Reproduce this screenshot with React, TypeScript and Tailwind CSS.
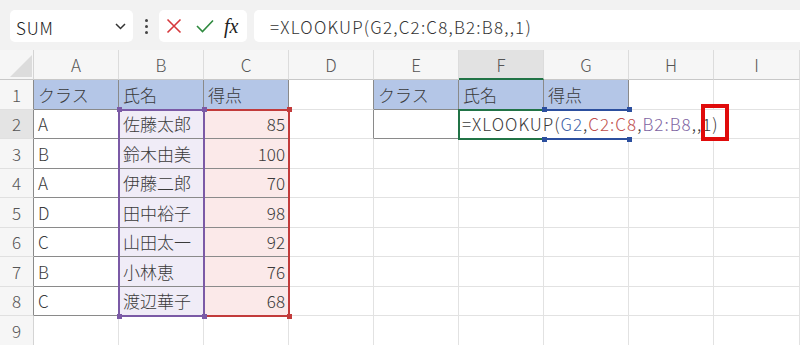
import React from "react";

const COLS = ["A", "B", "C", "D", "E", "F", "G", "H", "I"];

const cellText: Record<string, string> = {
  "1-0": "クラス",
  "1-1": "氏名",
  "1-2": "得点",
  "1-4": "クラス",
  "1-5": "氏名",
  "1-6": "得点",
};
const rows = [
  ["A", "佐藤太郎", "85"],
  ["B", "鈴木由美", "100"],
  ["A", "伊藤二郎", "70"],
  ["D", "田中裕子", "98"],
  ["C", "山田太一", "92"],
  ["B", "小林恵", "76"],
  ["C", "渡辺華子", "68"],
];
rows.forEach((r, i) => {
  cellText[`${i + 2}-0`] = r[0];
  cellText[`${i + 2}-1`] = r[1];
  cellText[`${i + 2}-2`] = r[2];
});

const inA = (r: number, c: number) => r >= 1 && r <= 8 && c >= 0 && c <= 2;
const inE = (r: number, c: number) => r >= 1 && r <= 2 && c >= 4 && c <= 6;
const inT = (r: number, c: number) => inA(r, c) || inE(r, c);

const FONT = "font-['Noto_Sans_CJK_JP',sans-serif]";

function Cell({ r, c }: { r: number; c: number }) {
  const key = `${r}-${c}`;
  const text = cellText[key];
  const rd = inT(r, c) || inT(r, c + 1);
  const bd = inT(r, c) || inT(r + 1, c);
  let bg = "";
  if (r === 1 && inT(r, c)) bg = "bg-[#b4c6e7]";
  else if (r >= 2 && r <= 8 && c === 1) bg = "bg-[#f0ecf7]";
  else if (r >= 2 && r <= 8 && c === 2) bg = "bg-[#fbe9e9]";
  const isNum = r >= 2 && c === 2;
  if (r === 2 && c === 5) {
    return (
      <div className="relative z-10 border-r border-b border-r-[#e2e2e2] border-b-[#8a8a8a] flex items-center overflow-visible">
        <span className="h-full inline-flex items-center whitespace-nowrap bg-white pl-[3px] pr-[2px] text-[17px] leading-none tracking-[1px] text-[#3a3a3a] font-light">
          <span>=XLOOKUP(</span>
          <span className="text-[#3f62a8]">G2</span>
          <span>,</span>
          <span className="text-[#c0504d]">C2:C8</span>
          <span>,</span>
          <span className="text-[#8064a2]">B2:B8</span>
          <span>,,1)</span>
        </span>
      </div>
    );
  }
  return (
    <div
      className={`border-r border-b ${rd ? "border-r-[#8a8a8a]" : "border-r-[#e2e2e2]"} ${
        bd ? "border-b-[#8a8a8a]" : "border-b-[#e2e2e2]"
      } ${bg} flex items-center ${isNum ? "justify-end pr-[3px]" : "pl-[4px]"} text-[17px] leading-none text-[#3a3a3a] font-light whitespace-nowrap overflow-hidden`}
    >
      {text ?? ""}
    </div>
  );
}

function RowHeader({ r }: { r: number }) {
  const dark = inT(r, 0);
  return (
    <div
      className={`border-r border-b border-b-[#e0e0e0] ${dark ? "border-r-[#8a8a8a]" : "border-r-[#d4d4d4]"} ${
        r === 2 ? "bg-[#e4e4e4]" : "bg-[#f6f6f6]"
      } flex items-center justify-center text-[17px] leading-none text-[#555] font-light`}
    >
      {r}
    </div>
  );
}

function ColHeader({ c }: { c: number }) {
  const sel = c === 5;
  return (
    <div
      className={`flex items-center justify-center text-[17px] leading-none text-[#555] font-light border-r border-r-[#dcdcdc] ${
        sel ? "bg-[#e2e2e2] border-b-2 border-b-[#217346]" : "bg-[#f6f6f6] border-b border-b-[#c8c8c8]"
      }`}
    >
      {COLS[c]}
    </div>
  );
}

function Handle({ cls }: { cls: string }) {
  return <div className={`absolute w-[5px] h-[5px] z-30 ${cls}`} />;
}

export default function App() {
  const grid: React.ReactNode[] = [];
  grid.push(
    <div key="corner" className="relative bg-[#f6f6f6] border-r border-b border-r-[#d4d4d4] border-b-[#c8c8c8]">
      <svg className="absolute left-[10px] top-[5px]" width="22" height="22" viewBox="0 0 22 22">
        <polygon points="0,22 22,22 22,0" fill="#dcdcdc" />
      </svg>
    </div>
  );
  for (let c = 0; c < 9; c++) grid.push(<ColHeader key={`h${c}`} c={c} />);
  for (let r = 1; r <= 9; r++) {
    grid.push(<RowHeader key={`r${r}`} r={r} />);
    for (let c = 0; c < 9; c++) grid.push(<Cell key={`${r}-${c}`} r={r} c={c} />);
  }

  return (
    <div className={`w-[800px] h-[345px] overflow-hidden bg-white ${FONT}`}>
      {/* formula bar */}
      <div className="h-[50px] bg-[#f2f2f2] flex items-start pt-[10px] pl-[10px]">
        <div className="w-[123px] h-[32px] bg-white rounded-[5px] flex items-center justify-between pl-[6px] pr-[7px]">
          <span className="text-[17px] leading-none tracking-[0.8px] text-[#222] font-light pt-[2px]">SUM</span>
          <svg width="11" height="7" viewBox="0 0 11 7">
            <path d="M1 1 L5.5 5.5 L10 1" stroke="#333" strokeWidth="1.5" fill="none" />
          </svg>
        </div>
        <div className="w-[26px] h-[32px] flex flex-col items-center justify-center gap-[3px]">
          <div className="w-[3px] h-[3px] rounded-full bg-[#444]" />
          <div className="w-[3px] h-[3px] rounded-full bg-[#444]" />
          <div className="w-[3px] h-[3px] rounded-full bg-[#444]" />
        </div>
        <div className="w-[88px] h-[32px] bg-white rounded-[5px] flex items-center pl-[7px] gap-[14px]">
          <svg width="16" height="16" viewBox="0 0 16 16">
            <path d="M1.5 1.5 L14.5 14.5 M14.5 1.5 L1.5 14.5" stroke="#d6383c" strokeWidth="1.6" fill="none" />
          </svg>
          <svg width="18" height="14" viewBox="0 0 18 14">
            <path d="M1 7 L6.5 12.5 L17 1.5" stroke="#2f8a3f" strokeWidth="1.6" fill="none" />
          </svg>
          <span className="font-['Liberation_Serif',serif] italic text-[20px] leading-none text-[#222] -ml-[4px]">fx</span>
        </div>
        <div className="ml-[7px] flex-1 h-[32px] bg-white rounded-l-[5px] pl-[16px] flex items-center text-[17px] leading-none tracking-[1.2px] text-[#333] font-light">
          =XLOOKUP(G2,C2:C8,B2:B8,,1)
        </div>
      </div>

      {/* sheet grid */}
      <div className="relative grid grid-cols-[34px_repeat(8,85px)_86px] grid-rows-[30px_repeat(9,29.5px)]">
        {grid}

        {/* red range C2:C8 */}
        <div className="absolute left-[203px] top-[58.5px] w-[87px] h-[208.5px] border-2 border-[#c23b3b] z-20 pointer-events-none" />
        {/* purple range B2:B8 */}
        <div className="absolute left-[118px] top-[58.5px] w-[87px] h-[208.5px] border-2 border-[#7b5aa6] z-20 pointer-events-none" />
        <Handle cls="left-[287px] top-[57px] bg-[#c23b3b]" />
        <Handle cls="left-[287px] top-[264px] bg-[#c23b3b]" />
        <Handle cls="left-[117px] top-[57px] bg-[#7b5aa6]" />
        <Handle cls="left-[202px] top-[57px] bg-[#7b5aa6]" />
        <Handle cls="left-[117px] top-[264px] bg-[#7b5aa6]" />
        <Handle cls="left-[202px] top-[264px] bg-[#7b5aa6]" />

        {/* active cell F2 */}
        <div className="absolute left-[458px] top-[58.5px] w-[87px] h-[31.5px] border-l-2 border-t-2 border-b-2 border-[#217346] z-20" />

        {/* blue range G2 */}
        <div className="absolute left-[544px] top-[58.5px] w-[86px] h-[31.5px] border-t-2 border-b-2 border-[#2c4f9e] z-20" />
        <Handle cls="left-[542px] top-[57px] bg-[#2c4f9e]" />
        <Handle cls="left-[627px] top-[57px] bg-[#2c4f9e]" />
        <Handle cls="left-[542px] top-[86.5px] bg-[#2c4f9e]" />
        <Handle cls="left-[627px] top-[86.5px] bg-[#2c4f9e]" />

        {/* highlight box */}
        <div className="absolute left-[701px] top-[54px] w-[28px] h-[37px] border-4 border-[#e00b0b] z-30" />
      </div>
    </div>
  );
}
